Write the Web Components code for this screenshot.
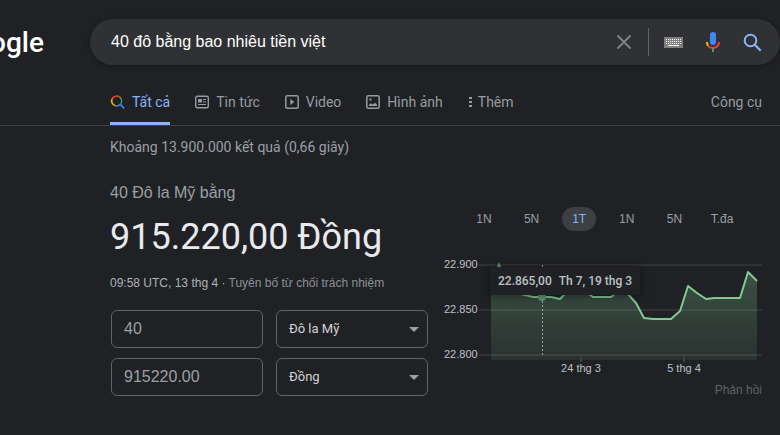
<!DOCTYPE html>
<html lang="vi">
<head>
<meta charset="utf-8">
<title>40 đô bằng bao nhiêu tiền việt - Google</title>
<style>
  html { background: #202124; }
  body { margin: 0; min-height: 100vh; background: #202124; color: #9aa0a6; font: 14px/20px "Liberation Sans", Arial, sans-serif; overflow-x: hidden; }
</style>
</head>
<body>
<search-page></search-page>
<script>
const define = (name, html, setup) => {
  const tpl = document.createElement('template');
  tpl.innerHTML = html;
  customElements.define(name, class extends HTMLElement {
    constructor() {
      super();
      this.attachShadow({ mode: 'open' }).append(tpl.content.cloneNode(true));
    }
    connectedCallback() { if (setup) setup(this, this.shadowRoot); }
  });
};

define('site-logo', `
<style>
  :host { display: flex; justify-content: flex-end; overflow: hidden; padding-top: 2px; }
  a { font: 500 28px/40px Roboto, sans-serif; color: #fff; text-decoration: none; }
</style>
<a href="#"><slot></slot></a>`);

define('search-box', `
<style>
  :host { display: block; }
  form { display: flex; align-items: center; height: 46px; padding: 0 18px 0 21px; border-radius: 23px; background: #303134; box-shadow: 0 1px 4px #17181a; }
  input { flex: 1; min-width: 0; padding: 0; border: 0; outline: 0; background: none; color: #fff; font: 16px/24px "Liberation Sans", Arial, sans-serif; }
  button { display: flex; padding: 0; border: 0; background: none; }
  .tools { display: flex; align-items: center; }
  .sep { width: 1px; height: 28px; margin: 0 15px 0 16px; background: #5f6368; }
  .mic { margin: 0 20px; }
</style>
<form>
  <input type="text" aria-label="Tìm kiếm" value="40 đô bằng bao nhiêu tiền việt">
  <div class="tools">
    <button type="button" aria-label="Xóa"><svg width="16" height="16" viewBox="0 0 16 16"><path d="M1.500 1.500l13 13M14.500 1.500l-13 13" stroke="#7d8287" stroke-width="2"/></svg></button>
    <span class="sep"></span>
    <button type="button" aria-label="Bàn phím"><svg width="19" height="11" viewBox="0 0 19 11" shape-rendering="crispEdges"><path fill="#808080" d="M0 0h19v11H0z"/><path d="M2 2.500h15M2 4.500h15M2 6.500h15" stroke="#fff" stroke-dasharray="1 1"/><path d="M4 8.500h11" stroke="#fff"/></svg></button>
    <button type="button" class="mic" aria-label="Tìm bằng giọng nói"><svg width="20" height="24" viewBox="0 0 20 24"><rect x="7" y="2" width="6" height="13" rx="3" fill="#4285f4"/><path fill="none" stroke="#ea4335" stroke-width="2" d="M4.800 15.500C7.500 19.500 16 18.500 16 12"/><path fill="none" stroke="#fbbc04" stroke-width="2" d="M4 12q0 2 .9 3.700"/><path fill="#34a853" d="M9 18.500h2V22H9z"/></svg></button>
    <button type="submit" aria-label="Tìm"><svg width="19" height="19" viewBox="0 0 19 19"><circle cx="7.500" cy="7.500" r="5.800" fill="none" stroke="#8ab4f8" stroke-width="2"/><path d="M11.700 11.700l6 6" stroke="#8ab4f8" stroke-width="2.200"/></svg></button>
  </div>
</form>`);

define('nav-tab', `
<style>
  :host { display: block; }
  a { display: flex; align-items: center; gap: 7px; height: 46px; padding-top: 2px; color: #969ba1; text-decoration: none; font: 14px/20px Roboto, sans-serif; border-bottom: 3px solid transparent; box-sizing: border-box; }
  :host([active]) a { color: #8ab4f8; border-bottom-color: #8ab4f8; }
  :host([compact]) a { gap: 5px; }
  ::slotted(svg) { flex: none; }
</style>
<a href="#"><slot name="icon"></slot><slot></slot></a>`);

define('tab-bar', `
<style>
  :host { display: block; border-bottom: 1px solid #3c4043; }
  nav { display: flex; gap: 25px; padding: 0 18px 0 110px; }
  nav-tab:last-child { margin-left: auto; }
</style>
<nav>
  <nav-tab active><svg slot="icon" width="15" height="14" viewBox="0 0 15 14" fill="none" stroke-width="1.500"><path stroke="#ea4335" d="M2.300 3.500A5 5 0 0 1 9.700 2.200"/><path stroke="#34a853" d="M9.700 2.200a5 5 0 0 1 1 6.700"/><path stroke="#fbbc04" d="M2.300 3.500a5 5 0 0 0 3.200 7.300"/><path stroke="#4285f4" d="M5.500 10.800a5 5 0 0 0 5.200-1.900M10.300 9.400l4 4"/></svg>Tất cả</nav-tab>
  <nav-tab><svg slot="icon" width="14" height="14" viewBox="0 0 14 14" stroke="#969ba1"><rect x=".7" y="1.200" width="12.600" height="11.600" rx="1.500" fill="none" stroke-width="1.400"/><path d="M3 4h4v3.500H3z" fill="#969ba1" stroke="none"/><path d="M8 4.500h3M8 7h3M3 9.500h8"/></svg>Tin tức</nav-tab>
  <nav-tab><svg slot="icon" width="14" height="14" viewBox="0 0 14 14"><rect x=".8" y=".8" width="12.400" height="12.400" rx="1.500" fill="none" stroke="#969ba1" stroke-width="1.500"/><path d="M5.300 4v6l4-3z" fill="#969ba1"/></svg>Video</nav-tab>
  <nav-tab><svg slot="icon" width="14" height="14" viewBox="0 0 14 14"><rect x=".8" y=".8" width="12.400" height="12.400" rx="1.500" fill="none" stroke="#969ba1" stroke-width="1.500"/><path d="M3 11V9.800l2-1.600 1.500 1.300L9 7.800l2 2V11zM3.500 3.500h2v2h-2z" fill="#969ba1"/></svg>Hình ảnh</nav-tab>
  <nav-tab compact><svg slot="icon" width="5" height="14" viewBox="0 0 5 14" fill="#969ba1"><path d="M1 2h3v2H1zM1 6h3v2H1zM1 10h3v2H1z"/></svg>Thêm</nav-tab>
  <nav-tab>Công cụ</nav-tab>
</nav>`);

define('currency-select', `
<style>
  :host { display: grid; align-items: center; }
  select, i { grid-area: 1 / 1; }
  select { width: 100%; height: 38px; padding: 0 28px 0 12px; appearance: none; border: 1px solid #5f6368; border-radius: 6px; background: none; color: #d0d3d6; font: 13px/20px Roboto, sans-serif; }
  i { justify-self: end; margin-right: 9px; border: 5px solid transparent; border-top-color: #9aa0a6; border-bottom: 0; pointer-events: none; }
</style>
<select></select><i></i>`, (host, root) => {
  const select = root.querySelector('select');
  select.setAttribute('aria-label', host.getAttribute('label'));
  select.add(new Option(host.getAttribute('value')));
});

define('currency-converter', `
<style>
  :host { display: block; }
  .from { font-size: 16px; line-height: 22px; }
  .result { margin: 9px 0 14px; font: 36px/48px Roboto, sans-serif; color: #e8eaed; white-space: nowrap; }
  .date { font-size: 12px; line-height: 16px; color: #aeb3b8; white-space: nowrap; }
  .date a { color: #8b9095; text-decoration: none; }
  form { display: grid; grid-template-columns: 1fr 1fr; gap: 10px 13px; margin: 19px 0 0; padding-left: 1px; }
  input { width: 100%; min-width: 0; height: 38px; box-sizing: border-box; padding: 0 12px; border: 1px solid #5f6368; border-radius: 6px; background: none; color: #9aa0a6; font: 16px/20px "Liberation Sans", Arial, sans-serif; }
</style>
<div class="from">40 Đô la Mỹ bằng</div>
<div class="result">915.220,00 Đồng</div>
<div class="date">09:58 UTC, 13 thg 4 · <a href="#">Tuyên bố từ chối trách nhiệm</a></div>
<form>
  <input type="text" aria-label="Số tiền nguồn" value="40">
  <currency-select label="Đơn vị nguồn" value="Đô la Mỹ"></currency-select>
  <input type="text" aria-label="Số tiền đích" value="915220.00">
  <currency-select label="Đơn vị đích" value="Đồng"></currency-select>
</form>`);

define('range-picker', `
<style>
  :host { display: flex; justify-content: space-between; padding: 0 23px; }
  button { width: 34px; height: 24px; padding: 0; border: 0; border-radius: 12px; background: none; color: #9aa0a6; font: 12px/24px "Liberation Sans", Arial, sans-serif; }
  button[aria-pressed=true] { background: #3c4043; color: #8ab4f8; }
</style>
<button>1N</button><button>5N</button><button aria-pressed="true">1T</button><button>1N</button><button>5N</button><button>T.đa</button>`);

define('rate-chart', `
<style>
  :host { display: block; position: relative; }
  svg { display: block; width: 100%; height: auto; overflow: visible; }
  text { font: 11px "Liberation Sans", Arial, sans-serif; fill: #bdc1c6; }
  .tip { position: absolute; left: 46px; top: 12px; padding: 0 8px; background: #202124; color: #bdc1c6; border-radius: 2px; box-shadow: 0 1px 8px rgba(0,0,0,.5); font: 500 12px/28px Roboto, sans-serif; white-space: nowrap; display: flex; gap: 7px; }
</style>
<svg viewBox="0 0 318 123">
  <defs><linearGradient id="g" x1="0" y1="0" x2="0" y2="1"><stop offset="0" stop-color="#81c995" stop-opacity=".3"/><stop offset="1" stop-color="#81c995" stop-opacity=".1"/></linearGradient></defs>
  <path fill="url(#g)" d="M47 105V38L55 8l8 28 18 4 8 2h18l9 2 9-9 11-2 13 9h18l8-6 7 1 10 11 8 15 9 1h18l9-8 8-25 9 7 9 6 8-1h26l8-26 9 9V105z"/>
  <path d="M35 10h283M35 55h283M35 100h283" stroke="#fff" stroke-opacity=".08" stroke-width="2"/>
  <path d="M137 101v6M240 101v6" stroke="#3c4043" stroke-width="2"/>
  <path fill="none" stroke="#81c995" stroke-width="2" stroke-linejoin="round" d="M63 36l18 4 8 2h18l9 2 9-9 11-2 13 9h18l8-6 7 1 10 11 8 15 9 1h18l9-8 8-25 9 7 9 6 8-1h26l8-26 9 9"/>
  <path fill="#5f9b72" d="M55 7l2 5h-4z"/>
  <path d="M98.500 10v90" stroke="#9aa0a6" stroke-dasharray="2 2"/>
  <circle cx="98" cy="42" r="4" fill="#5f9b72"/>
  <text x="0" y="13">22.900</text><text x="0" y="58">22.850</text><text x="0" y="103">22.800</text>
  <text x="137" y="117" text-anchor="middle">24 thg 3</text><text x="240" y="117" text-anchor="middle">5 thg 4</text>
</svg>
<div class="tip"><span>22.865,00</span><span>Th 7, 19 thg 3</span></div>`);

define('search-page', `
<style>
  :host { display: block; }
  header { display: grid; grid-template-columns: 44px minmax(0, 1fr); gap: 46px; align-items: center; padding-top: 19px; }
  tab-bar { margin-top: 14px; }
  main { padding: 11px 18px 0 110px; }
  .stats { font: 14px/20px Roboto, sans-serif; }
  .card { display: grid; grid-template-columns: 1fr 1fr; gap: 16px; margin-top: 25px; }
  range-picker { margin-top: 25px; }
  rate-chart { margin-top: 24px; }
  .feedback { display: block; margin-top: 4px; text-align: right; font-size: 12px; line-height: 16px; color: #5f6368; text-decoration: none; }
</style>
<header><site-logo>Google</site-logo><search-box></search-box></header>
<tab-bar></tab-bar>
<main>
  <div class="stats">Khoảng 13.900.000 kết quả (0,66 giây)</div>
  <section class="card">
    <currency-converter></currency-converter>
    <div><range-picker></range-picker><rate-chart></rate-chart><a class="feedback" href="#">Phản hồi</a></div>
  </section>
</main>`);
</script>
</body>
</html>
